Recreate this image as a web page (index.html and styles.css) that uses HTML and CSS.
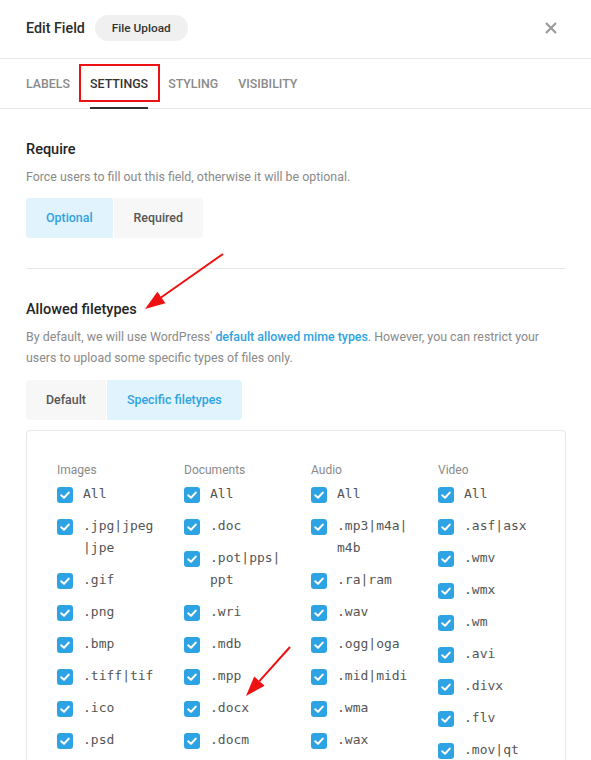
FILE: index.html
```html
<!DOCTYPE html>
<html lang="en">
<head>
    <meta charset="UTF-8">
    <meta name="viewport" content="width=device-width, initial-scale=1.0">
    <title>Edit Field</title>
    <link rel="stylesheet" href="styles.css">
</head>
<body>
    <div class="panel">
        <div class="header">
            <span class="title">Edit Field</span>
            <span class="pill">File Upload</span>
            <span class="close">
                <svg width="12" height="12" viewBox="0 0 12 12"><path d="M1 1L11 11M11 1L1 11" stroke="#9a9a9a" stroke-width="2.2"/></svg>
            </span>
        </div>
        <div class="tabs">
            <div class="tab">Labels</div>
            <div class="tab active">Settings</div>
            <div class="tab">Styling</div>
            <div class="tab">Visibility</div>
        </div>

        <div class="content">
            <div class="section">
                <div class="section-title">Require</div>
                <div class="desc">Force users to fill out this field, otherwise it will be optional.</div>
                <div class="toggle">
                    <div class="opt selected">Optional</div>
                    <div class="opt">Required</div>
                </div>
            </div>

            <div class="divider"></div>

            <div class="section">
                <div class="section-title">Allowed filetypes</div>
                <div class="desc">By default, we will use WordPress' <a href="#">default allowed mime types</a>. However, you can restrict your users to upload some specific types of files only.</div>
                <div class="toggle">
                    <div class="opt">Default</div>
                    <div class="opt selected">Specific filetypes</div>
                </div>
                <div class="types" id="types"></div>
            </div>
        </div>

        <!-- review marks -->
        <svg class="marks" width="591" height="760">
            <rect x="80" y="65" width="79" height="36" fill="none" stroke="#ee1111" stroke-width="2"/>
            <line x1="223" y1="254" x2="161" y2="297.5" stroke="#ee1111" stroke-width="2"/>
            <polygon points="145,309 165.4,303.2 157.4,291.8" fill="#ee1111"/>
            <line x1="290" y1="647" x2="259.4" y2="681.1" stroke="#ee1111" stroke-width="2"/>
            <polygon points="246,696 264.6,685.8 254.2,676.4" fill="#ee1111"/>
        </svg>
    </div>

    <script>
        var groups = [
            {name: "Images", items: ["All", ".jpg|jpeg|jpe", ".gif", ".png", ".bmp", ".tiff|tif", ".ico", ".psd", ".heic"]},
            {name: "Documents", items: ["All", ".doc", ".pot|pps|ppt", ".wri", ".mdb", ".mpp", ".docx", ".docm", ".dotx"]},
            {name: "Audio", items: ["All", ".mp3|m4a|m4b", ".ra|ram", ".wav", ".ogg|oga", ".mid|midi", ".wma", ".wax", ".mka"]},
            {name: "Video", items: ["All", ".asf|asx", ".wmv", ".wmx", ".wm", ".avi", ".divx", ".flv", ".mov|qt", ".mpeg|mpg|mpe"]}
        ];
        var check = '<span class="box"><svg width="16" height="16" viewBox="0 0 16 16"><path d="M4.2 8.2L7 10.8L11.8 5.6" fill="none" stroke="#fff" stroke-width="2" stroke-linecap="round" stroke-linejoin="round"/></svg></span>';

        var html = groups.map(function(g){
            var rows = g.items.map(function(item){
                return '<div class="item">' + check + '<span class="ext">' + item + '</span></div>';
            }).join("");
            return '<div class="col"><div class="col-title">' + g.name + '</div>' + rows + '</div>';
        }).join("");
        document.getElementById("types").innerHTML = html;
    </script>
</body>
</html>
```

FILE: styles.css
```css
html, body{
    margin: 0;
    padding: 0;
    background: #fff;
}
body{
    font-family: Roboto, "Liberation Sans", sans-serif;
    color: #333;
}
.panel{
    position: relative;
    width: 591px;
    height: 100vh;
    overflow: hidden;
}

/* header */
.header{
    display: flex;
    align-items: center;
    height: 26px;
    padding: 15px 30px 17px 26px;
    border-bottom: 1px solid #e6e6e6;
}
.header .title{
    font-size: 14.3px;
    font-weight: 500;
    color: #2b2b2b;
}
.header .pill{
    margin-left: 10px;
    height: 26px;
    line-height: 26px;
    padding: 0 17px;
    border-radius: 13px;
    background: #f0f0f0;
    font-size: 11.8px;
    font-weight: 500;
    color: #333;
}
.header .close{
    margin-left: auto;
    width: 20px;
    height: 20px;
    display: flex;
    align-items: center;
    justify-content: center;
}

/* tabs */
.tabs{
    display: flex;
    gap: 20px;
    padding: 0 26px;
    border-bottom: 1px solid #e6e6e6;
}
.tab{
    height: 48px;
    line-height: 49px;
    margin-bottom: -1px;
    border-bottom: 2px solid transparent;
    font-size: 12.4px;
    font-weight: 500;
    text-transform: uppercase;
    color: #8a8a8a;
}
.tab.active{
    color: #333;
    border-bottom-color: #333;
}

/* settings */
.content{
    padding: 31px 25px 0 26px;
}
.section-title{
    font-size: 14.5px;
    line-height: 20px;
    font-weight: 500;
    color: #242424;
    margin-bottom: 6px;
}
.desc{
    font-size: 12.4px;
    line-height: 21px;
    color: #8a8a8a;
    margin-bottom: 11px;
}
.desc a{
    color: #2ea3e3;
    font-weight: 500;
    text-decoration: none;
}
.toggle{
    display: inline-flex;
    gap: 1px;
    border-radius: 4px;
    overflow: hidden;
}
.toggle .opt{
    height: 40px;
    line-height: 40px;
    padding: 0 20px;
    background: #f7f7f7;
    font-size: 12.4px;
    font-weight: 500;
    color: #555;
}
.toggle .opt.selected{
    background: #e1f3fc;
    color: #2ea3e3;
}
.divider{
    height: 1px;
    background: #e6e6e6;
    margin: 30px 0 31px;
}
.section + .divider + .section .toggle{
    margin-top: 1px;
}

/* filetype checklist */
.types{
    display: grid;
    grid-template-columns: repeat(4, 1fr);
    margin-top: 10px;
    padding: 31px 0 20px 30px;
    border: 1px solid #e6e6e6;
    border-radius: 4px;
}
.col-title{
    font-size: 12px;
    line-height: 16px;
    color: #8a8a8a;
    margin-bottom: 5px;
}
.item{
    display: flex;
    align-items: flex-start;
    gap: 10px;
    margin-bottom: 10px;
}
.item .box{
    flex: none;
    width: 16px;
    height: 16px;
    margin-top: 4px;
    border-radius: 3px;
    background: #2ea3e3;
    display: flex;
}
.item .ext{
    width: 76px;
    font-family: "DejaVu Sans Mono", "Liberation Mono", monospace;
    font-size: 13px;
    line-height: 22px;
    color: #555;
    word-break: break-all;
}

.marks{
    position: absolute;
    left: 0;
    top: 0;
    pointer-events: none;
}
```
